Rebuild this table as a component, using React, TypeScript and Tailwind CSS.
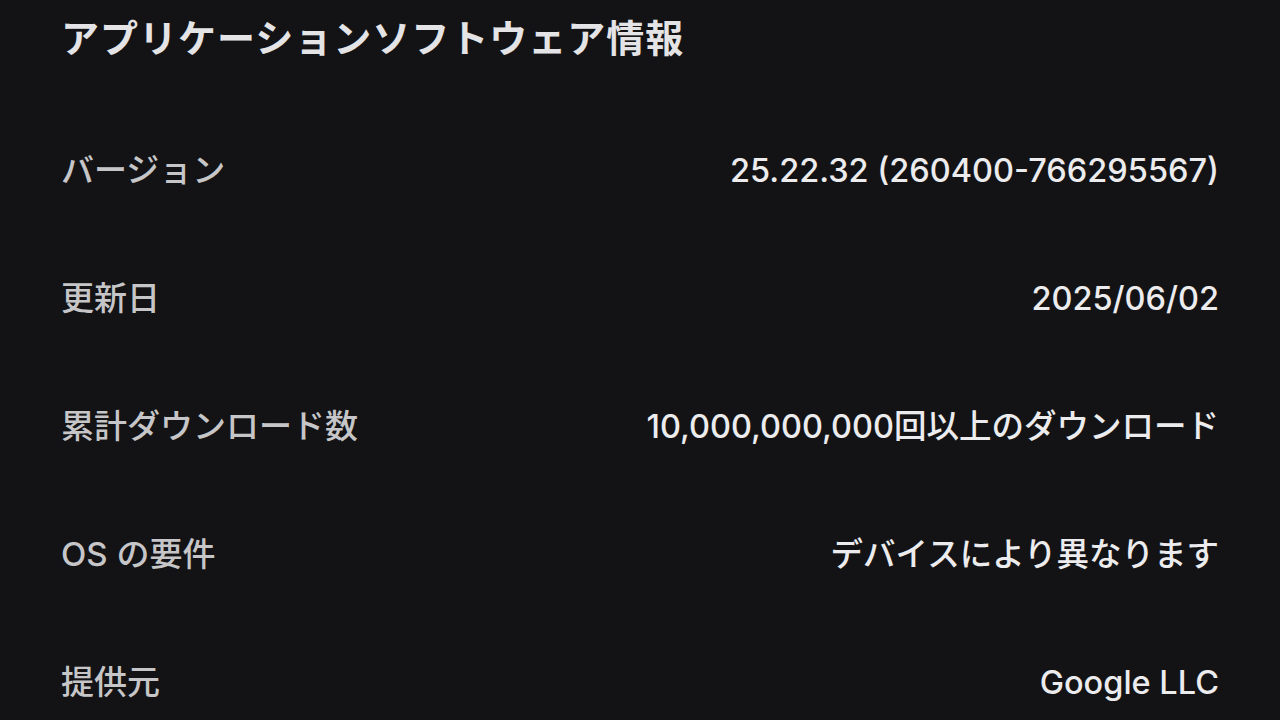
export default function App() {
  const rows = [
    { label: "バージョン", value: "25.22.32 (260400-766295567)" },
    { label: "更新日", value: "2025/06/02" },
    { label: "累計ダウンロード数", value: "10,000,000,000回以上のダウンロード" },
    { label: "OS の要件", value: "デバイスにより異なります" },
    { label: "提供元", value: "Google LLC" },
  ]

  return (
    <div
      className="w-[1280px] h-[720px] overflow-hidden bg-[#131315] px-[61px]"
      style={{ fontFamily: 'Inter, "Noto Sans CJK JP", sans-serif' }}
    >
      <div className="h-[76px] flex items-center">
        <h1 className="text-[38px] font-bold text-[#e4e4e6] tracking-[1px]">
          アプリケーションソフトウェア情報
        </h1>
      </div>
      <div className="mt-[31px] flex flex-col">
        {rows.map((r) => (
          <div key={r.label} className="h-[128px] flex items-center justify-between">
            <span className="text-[33px] font-medium text-[#c6c6c8]">{r.label}</span>
            <span className="text-[32.5px] font-medium text-[#ececee]">{r.value}</span>
          </div>
        ))}
      </div>
    </div>
  )
}
